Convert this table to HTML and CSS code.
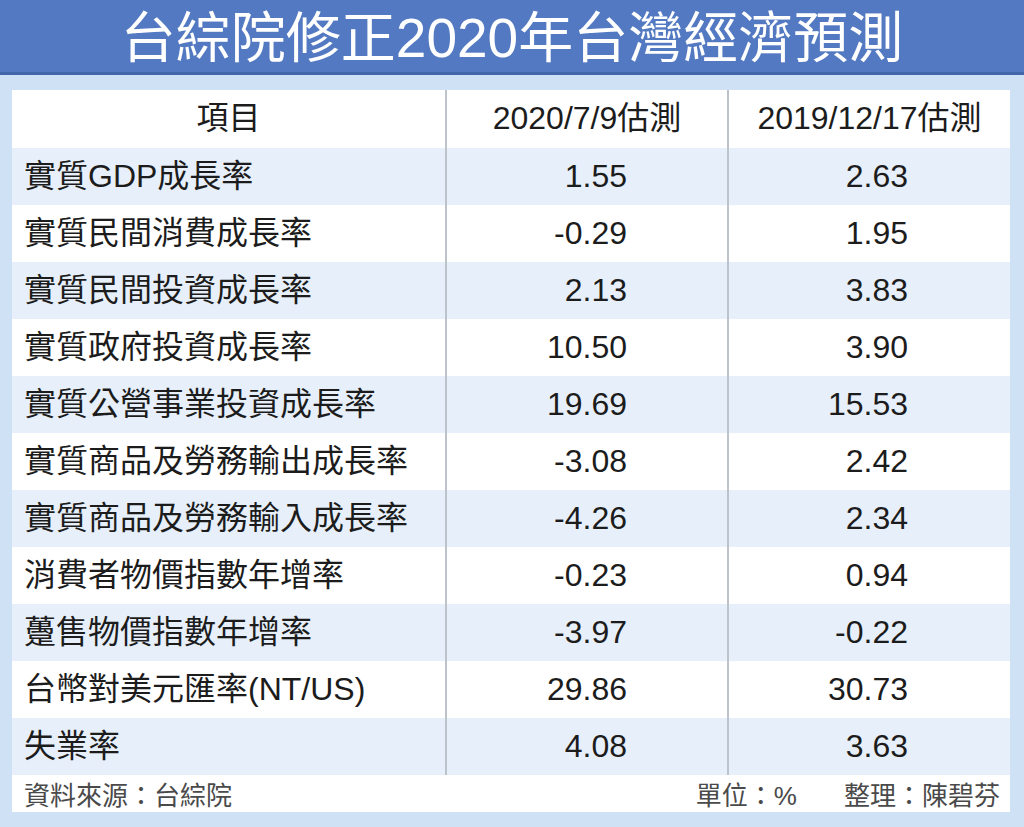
FILE: index.html
```html
<!DOCTYPE html>
<html lang="zh-Hant">
<head>
<meta charset="utf-8">
<title>台綜院修正2020年台灣經濟預測</title>
<link rel="stylesheet" href="styles.css">
</head>
<body>
<div class="page">
  <div class="title">台綜院修正2020年台灣經濟預測</div>
  <div class="frame">
    <div class="table">
      <div class="row head">
        <div class="cell c1">項目</div>
        <div class="cell c2">2020/7/9估測</div>
        <div class="cell c3">2019/12/17估測</div>
      </div>
      <div class="row alt">
        <div class="cell c1">實質GDP成長率</div>
        <div class="cell c2">1.55</div>
        <div class="cell c3">2.63</div>
      </div>
      <div class="row">
        <div class="cell c1">實質民間消費成長率</div>
        <div class="cell c2">-0.29</div>
        <div class="cell c3">1.95</div>
      </div>
      <div class="row alt">
        <div class="cell c1">實質民間投資成長率</div>
        <div class="cell c2">2.13</div>
        <div class="cell c3">3.83</div>
      </div>
      <div class="row">
        <div class="cell c1">實質政府投資成長率</div>
        <div class="cell c2">10.50</div>
        <div class="cell c3">3.90</div>
      </div>
      <div class="row alt">
        <div class="cell c1">實質公營事業投資成長率</div>
        <div class="cell c2">19.69</div>
        <div class="cell c3">15.53</div>
      </div>
      <div class="row">
        <div class="cell c1">實質商品及勞務輸出成長率</div>
        <div class="cell c2">-3.08</div>
        <div class="cell c3">2.42</div>
      </div>
      <div class="row alt">
        <div class="cell c1">實質商品及勞務輸入成長率</div>
        <div class="cell c2">-4.26</div>
        <div class="cell c3">2.34</div>
      </div>
      <div class="row">
        <div class="cell c1">消費者物價指數年增率</div>
        <div class="cell c2">-0.23</div>
        <div class="cell c3">0.94</div>
      </div>
      <div class="row alt">
        <div class="cell c1">躉售物價指數年增率</div>
        <div class="cell c2">-3.97</div>
        <div class="cell c3">-0.22</div>
      </div>
      <div class="row">
        <div class="cell c1">台幣對美元匯率(NT/US)</div>
        <div class="cell c2">29.86</div>
        <div class="cell c3">30.73</div>
      </div>
      <div class="row alt">
        <div class="cell c1">失業率</div>
        <div class="cell c2">4.08</div>
        <div class="cell c3">3.63</div>
      </div>
      <div class="foot">
        <span class="src">資料來源：台綜院</span>
        <span class="right">
          <span class="unit">單位：%</span>
          <span class="editor">整理：陳碧芬</span>
        </span>
      </div>
    </div>
  </div>
</div>
</body>
</html>
```

FILE: styles.css
```css
html, body {
  margin: 0;
  padding: 0;
}
body {
  background: #cfe1f5;
  font-family: "Liberation Sans", "Noto Sans CJK TC", "Noto Sans CJK SC", sans-serif;
  color: #1c1c1c;
}
.page {
  width: 1024px;
  height: 827px;
  overflow: hidden;
  background: #cfe1f5;
}
.title {
  height: 72px;
  line-height: 76px;
  background: #5279c1;
  border-bottom: 3px solid #4266aa;
  color: #ffffff;
  font-size: 55px;
  text-align: center;
}
.frame {
  padding: 15px 14px 15px 12px;
}
.table {
  background: #ffffff;
}
.row {
  display: grid;
  grid-template-columns: 433px 282px 283px;
  height: 57px;
}
.row.head {
  height: 58px;
}
.row.alt {
  background: #e7f0fa;
}
.cell {
  font-size: 32px;
  line-height: 57px;
  white-space: nowrap;
}
.head .cell {
  line-height: 56px;
  text-align: center;
}
.c1 {
  padding-left: 12px;
}
.head .c1 {
  padding-left: 0;
}
.c2, .c3 {
  border-left: 2px solid #bcc3cb;
}
.c2 {
  text-align: right;
  padding-right: 100px;
}
.c3 {
  text-align: right;
  padding-right: 102px;
}
.head .c2, .head .c3 {
  padding-right: 0;
}
.foot {
  height: 37px;
  display: flex;
  justify-content: space-between;
  align-items: center;
  font-size: 26px;
  color: #4a4a4a;
  padding: 0 10px 0 12px;
}
.right {
  display: flex;
  gap: 47px;
}
```
